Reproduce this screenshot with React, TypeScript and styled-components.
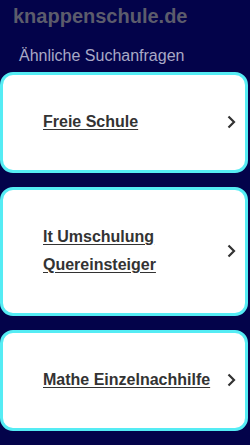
import React, { FC } from "react"
import styled, { createGlobalStyle } from "styled-components"

const GlobalStyle = createGlobalStyle`
    html, body {
        margin: 0;
        padding: 0;
        background: #03034a;
    }
    body {
        font-family: "Liberation Sans", Arial, sans-serif;
    }
`

const StyledPage = styled.div`
    width: 250px;
    min-height: 445px;
    background: #03034a;
    overflow: hidden;
`

const StyledDomain = styled.h1`
    margin: 0;
    padding: 3px 0 0 13px;
    font-size: 20px;
    line-height: 26px;
    font-weight: bold;
    color: #5c5c6c;
`

const StyledHeading = styled.h2`
    margin: 0;
    padding: 16px 0 0 19px;
    font-size: 16px;
    line-height: 22px;
    font-weight: normal;
    color: #a9a9c6;
`

const StyledList = styled.div`
    display: flex;
    flex-direction: column;
    gap: 14px;
    padding: 5px 2px 0 0;
`

const StyledCard = styled.a`
    display: flex;
    align-items: center;
    justify-content: space-between;
    background: #fff;
    border: 3px solid #55ecf4;
    border-radius: 13px;
    padding: 33px 9px 34px 40px;
    text-decoration: none;
`

const StyledLabel = styled.span`
    max-width: 172px;
    font-size: 16px;
    line-height: 28px;
    font-weight: bold;
    color: #333;
    text-decoration: underline;
    text-underline-offset: 2px;
`

const Chevron: FC = () => (
    <svg width="10" height="16" viewBox="0 0 10 16">
        <path d="M2.5 2.5 L8 8 L2.5 13.5" fill="none" stroke="#333" strokeWidth="2.2" />
    </svg>
)

const suggestions = ["Freie Schule", "It Umschulung Quereinsteiger", "Mathe Einzelnachhilfe"]

export default function App() {
    return (
        <StyledPage>
            <GlobalStyle />
            <StyledDomain>knappenschule.de</StyledDomain>
            <StyledHeading>Ähnliche Suchanfragen</StyledHeading>
            <StyledList>
                {suggestions.map(s => (
                    <StyledCard key={s} href="#">
                        <StyledLabel>{s}</StyledLabel>
                        <Chevron />
                    </StyledCard>
                ))}
            </StyledList>
        </StyledPage>
    )
}
